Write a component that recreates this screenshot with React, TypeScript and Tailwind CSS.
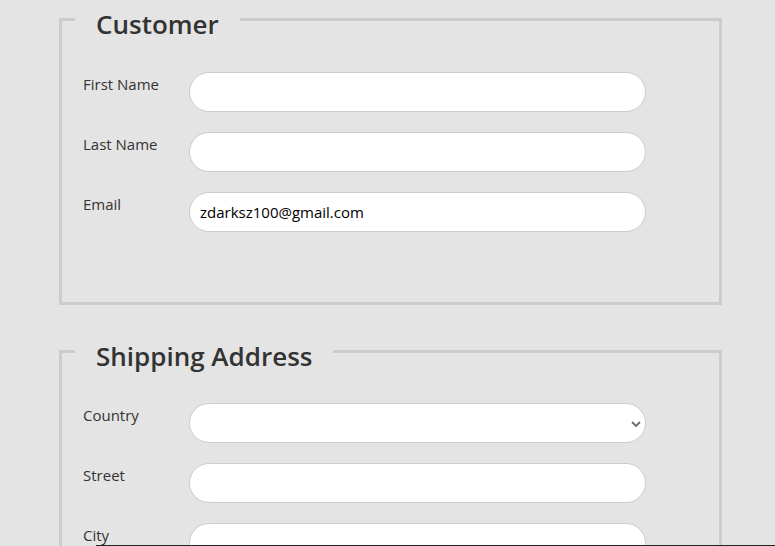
import { ReactNode } from "react";

const font = { fontFamily: '"Segoe UI", "Open Sans", sans-serif' };

function Row({ label, children }: { label: string; children: ReactNode }) {
  return (
    <div className="flex items-start ml-[8px]">
      <label className="w-[106px] pt-[2px] text-[15px] leading-[20px] text-[#333]">
        {label}
      </label>
      {children}
    </div>
  );
}

function TextInput({ value = "" }: { value?: string }) {
  return (
    <input
      type="text"
      defaultValue={value}
      className="w-[457px] h-[40px] rounded-full border border-[#ccc] bg-white px-[10px] text-[15px] text-black outline-none"
    />
  );
}

function Section({ title, children }: { title: string; children: ReactNode }) {
  return (
    <fieldset className="ml-[59px] w-[663px] border-[3px] border-[#ccc] pl-[13px]">
      <legend className="px-[21px] pt-[9px] text-[26px] leading-[28px] font-semibold text-[#333]">
        {title}
      </legend>
      {children}
    </fieldset>
  );
}

export default function App() {
  return (
    <div className="h-[546px] overflow-hidden bg-[#e4e4e4] pt-[1px]" style={font}>
      <Section title="Customer">
        <div className="flex flex-col gap-[20px] pt-[34px] pb-[70px]">
          <Row label="First Name">
            <TextInput />
          </Row>
          <Row label="Last Name">
            <TextInput />
          </Row>
          <Row label="Email">
            <TextInput value="zdarksz100@gmail.com" />
          </Row>
        </div>
      </Section>

      <div className="mt-[28px]">
        <Section title="Shipping Address">
          <div className="flex flex-col gap-[20px] pt-[33px] pb-[70px]">
            <Row label="Country">
              <div className="relative">
                <select className="w-[457px] h-[40px] appearance-none rounded-full border border-[#ccc] bg-white px-[10px] text-[15px] outline-none">
                  <option value=""></option>
                </select>
                <svg
                  className="absolute right-[5px] top-[18px] pointer-events-none"
                  width="10"
                  height="6"
                  viewBox="0 0 10 6"
                  fill="none"
                  stroke="#6b6b6b"
                  strokeWidth="1.8"
                >
                  <path d="M1 1l4 4 4-4" />
                </svg>
              </div>
            </Row>
            <Row label="Street">
              <TextInput />
            </Row>
            <Row label="City">
              <TextInput />
            </Row>
            <Row label="Zip">
              <TextInput />
            </Row>
          </div>
        </Section>
      </div>

      {/* dark strip peeking in at the bottom of the viewport */}
      <div className="fixed bottom-0 left-[96px] right-0 h-px bg-[#1e2626]" />
    </div>
  );
}
